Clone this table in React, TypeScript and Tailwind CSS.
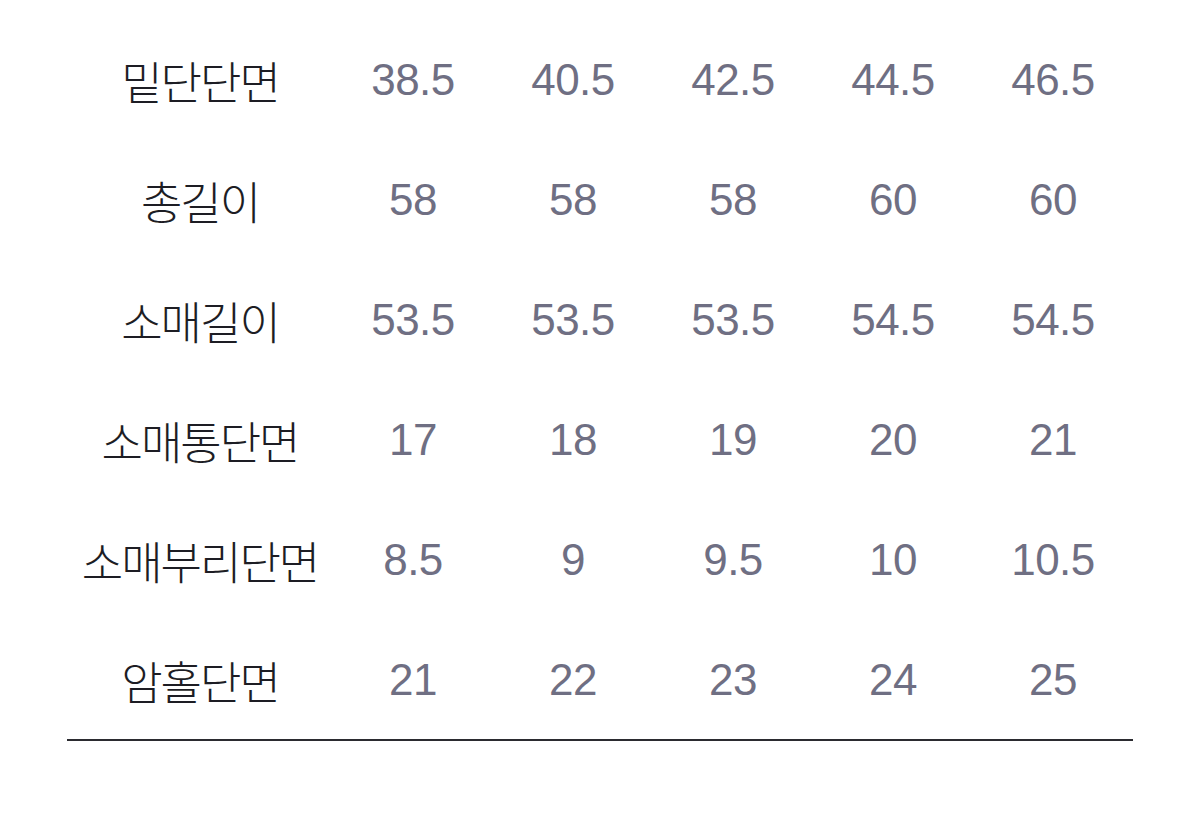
import React from "react";

const rows: [string, string[]][] = [
  ["밑단단면", ["38.5", "40.5", "42.5", "44.5", "46.5"]],
  ["총길이", ["58", "58", "58", "60", "60"]],
  ["소매길이", ["53.5", "53.5", "53.5", "54.5", "54.5"]],
  ["소매통단면", ["17", "18", "19", "20", "21"]],
  ["소매부리단면", ["8.5", "9", "9.5", "10", "10.5"]],
  ["암홀단면", ["21", "22", "23", "24", "25"]],
];

export default function App() {
  return (
    <div className="w-[1200px] h-[840px] bg-white pt-[20px] px-[67px]">
      <div className="w-[1066px]">
        {rows.map(([label, vals]) => (
          <div key={label} className="grid grid-cols-[266px_repeat(5,160px)] h-[120px] items-center">
            <div
              className="text-center text-[45px] font-light tracking-[-2px] text-[#1d1d24] leading-none"
              style={{ fontFamily: '"Noto Sans CJK KR", "Noto Sans", sans-serif' }}
            >
              {label}
            </div>
            {vals.map((v, i) => (
              <div
                key={i}
                className="text-center text-[44px] tracking-[-0.5px] text-[#6f6f83] leading-none"
                style={{ fontFamily: '"Liberation Sans", Arial, sans-serif' }}
              >
                {v}
              </div>
            ))}
          </div>
        ))}
        <div className="h-[2px] bg-[#2b2b30] -mt-[1px]" />
      </div>
    </div>
  );
}
